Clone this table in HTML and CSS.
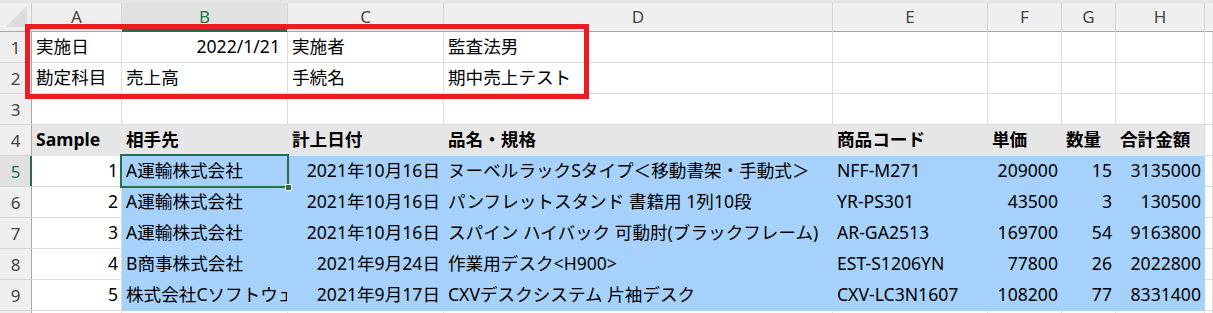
FILE: index.html
```html
<!DOCTYPE html>
<html>

<head>
    <meta charset="UTF-8">
    <title>監査シート</title>
    <link rel="stylesheet" href="styles.css">
</head>

<body>
    <div class="edge"></div>
    <div class="sheet">
        <!-- column headers -->
        <div class="corner"><svg width="31" height="28" viewBox="0 0 31 28"><polygon points="6,24 27,24 27,3" fill="#dcdcdc" /></svg></div>
        <div class="ch">A</div>
        <div class="ch on">B</div>
        <div class="ch">C</div>
        <div class="ch">D</div>
        <div class="ch">E</div>
        <div class="ch">F</div>
        <div class="ch">G</div>
        <div class="ch">H</div>
        <div class="ch last"></div>

        <!-- row 1 -->
        <div class="rh">1</div>
        <div class="c">実施日</div>
        <div class="c num wide">2022/1/21</div>
        <div class="c">実施者</div>
        <div class="c">監査法男</div>
        <div class="c"></div>
        <div class="c"></div>
        <div class="c"></div>
        <div class="c"></div>
        <div class="c"></div>

        <!-- row 2 -->
        <div class="rh">2</div>
        <div class="c">勘定科目</div>
        <div class="c">売上高</div>
        <div class="c">手続名</div>
        <div class="c">期中売上テスト</div>
        <div class="c"></div>
        <div class="c"></div>
        <div class="c"></div>
        <div class="c"></div>
        <div class="c"></div>

        <!-- row 3 -->
        <div class="rh">3</div>
        <div class="c"></div>
        <div class="c"></div>
        <div class="c"></div>
        <div class="c"></div>
        <div class="c"></div>
        <div class="c"></div>
        <div class="c"></div>
        <div class="c"></div>
        <div class="c"></div>

        <!-- row 4: table head -->
        <div class="rh">4</div>
        <div class="c hd">Sample</div>
        <div class="c hd">相手先</div>
        <div class="c hd">計上日付</div>
        <div class="c hd">品名・規格</div>
        <div class="c hd">商品コード</div>
        <div class="c hd">単価</div>
        <div class="c hd">数量</div>
        <div class="c hd end">合計金額</div>
        <div class="c"></div>

        <!-- row 5 -->
        <div class="rh on">5</div>
        <div class="c num">1</div>
        <div class="c bl">A運輸株式会社</div>
        <div class="c bl num">2021年10月16日</div>
        <div class="c bl">ヌーベルラックSタイプ＜移動書架・手動式＞</div>
        <div class="c bl">NFF-M271</div>
        <div class="c bl num">209000</div>
        <div class="c bl num">15</div>
        <div class="c bl num">3135000</div>
        <div class="c"></div>

        <!-- row 6 -->
        <div class="rh">6</div>
        <div class="c num">2</div>
        <div class="c bl">A運輸株式会社</div>
        <div class="c bl num">2021年10月16日</div>
        <div class="c bl">パンフレットスタンド 書籍用 1列10段</div>
        <div class="c bl">YR-PS301</div>
        <div class="c bl num">43500</div>
        <div class="c bl num">3</div>
        <div class="c bl num">130500</div>
        <div class="c"></div>

        <!-- row 7 -->
        <div class="rh">7</div>
        <div class="c num">3</div>
        <div class="c bl">A運輸株式会社</div>
        <div class="c bl num">2021年10月16日</div>
        <div class="c bl">スパイン ハイバック 可動肘(ブラックフレーム)</div>
        <div class="c bl">AR-GA2513</div>
        <div class="c bl num">169700</div>
        <div class="c bl num">54</div>
        <div class="c bl num">9163800</div>
        <div class="c"></div>

        <!-- row 8 -->
        <div class="rh">8</div>
        <div class="c num">4</div>
        <div class="c bl">B商事株式会社</div>
        <div class="c bl num">2021年9月24日</div>
        <div class="c bl">作業用デスク&lt;H900&gt;</div>
        <div class="c bl">EST-S1206YN</div>
        <div class="c bl num">77800</div>
        <div class="c bl num">26</div>
        <div class="c bl num">2022800</div>
        <div class="c"></div>

        <!-- row 9 -->
        <div class="rh">9</div>
        <div class="c num">5</div>
        <div class="c bl">株式会社Cソフトウェア</div>
        <div class="c bl num">2021年9月17日</div>
        <div class="c bl">CXVデスクシステム 片袖デスク</div>
        <div class="c bl">CXV-LC3N1607</div>
        <div class="c bl num">108200</div>
        <div class="c bl num">77</div>
        <div class="c bl num">8331400</div>
        <div class="c"></div>

        <!-- row 10 (cut off) -->
        <div class="rh"></div>
        <div class="c"></div>
        <div class="c"></div>
        <div class="c"></div>
        <div class="c"></div>
        <div class="c"></div>
        <div class="c"></div>
        <div class="c"></div>
        <div class="c"></div>
        <div class="c"></div>

        <!-- active cell B5 and its fill handle -->
        <div class="active"><span class="handle"></span></div>
        <!-- red marker round the header block -->
        <div class="marker"></div>
    </div>
</body>

</html>
```

FILE: styles.css
```css
* {
    box-sizing: border-box;
}

body {
    margin: 0;
    background: #fff;
    overflow: hidden;
}

.edge {
    height: 3px;
    background: #e6e6e6;
}

.sheet {
    position: relative;
    display: grid;
    grid-template-columns: 32px 90px 166px 156px 389px 155px 74px 54px 89px 1fr;
    grid-template-rows: 29px;
    grid-auto-rows: 31px;
    font-family: "Noto Sans", "Noto Sans CJK JP", sans-serif;
    font-size: 17.6px;
    color: #000;
}

.corner {
    background: #efefef;
    border-right: 1px solid #d0d0d0;
    border-bottom: 1px solid #a6a6a6;
}

.corner svg {
    display: block;
}

.ch {
    background: #efefef;
    border-right: 1px solid #d6d6d6;
    border-bottom: 1px solid #a6a6a6;
    color: #444;
    font-size: 17px;
    display: flex;
    align-items: center;
    justify-content: center;
    padding-bottom: 1px;
}

.ch.on {
    background: #e1e1e1;
    color: #217346;
    border-bottom-color: #217346;
    box-shadow: inset 0 -2px 0 #217346;
}

.ch.last {
    border-right: 0;
}

.rh {
    background: #efefef;
    border-right: 1px solid #a6a6a6;
    border-bottom: 1px solid #d6d6d6;
    color: #444;
    font-size: 17px;
    display: flex;
    align-items: center;
    justify-content: center;
}

.rh.on {
    background: #e1e1e1;
    color: #217346;
    border-right-color: #217346;
    box-shadow: inset -1px 0 0 #217346;
}

.c {
    border-right: 1px solid #dcdcdc;
    border-bottom: 1px solid #dcdcdc;
    padding: 0 3px 0 4px;
    display: flex;
    align-items: center;
    white-space: nowrap;
    overflow: hidden;
    line-height: 1;
}

.num {
    justify-content: flex-end;
}

.wide {
    padding-right: 7px;
}

.hd {
    background: #e7e6e6;
    border-color: #e7e6e6;
    font-weight: bold;
}

.hd.end {
    border-right-color: #dcdcdc;
}

.bl {
    background: #a6d1fa;
    border-color: #a6d1fa;
}

.active {
    position: absolute;
    left: 120px;
    top: 151px;
    width: 169px;
    height: 34px;
    border: 2px solid #217346;
}

.handle {
    position: absolute;
    right: -5px;
    bottom: -5px;
    width: 7px;
    height: 7px;
    background: #217346;
    border: 1px solid #fff;
}

.marker {
    position: absolute;
    left: 25px;
    top: 21px;
    width: 564px;
    height: 75px;
    border: 5px solid #ec1c24;
}
```
